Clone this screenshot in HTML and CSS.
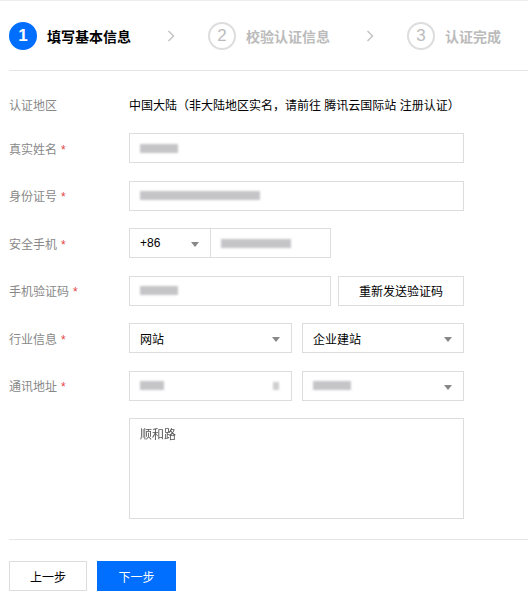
FILE: index.html
```html
<!DOCTYPE html>
<html lang="zh-CN">
<head>
<meta charset="utf-8">
<title>实名认证</title>
<link rel="stylesheet" href="styles.css">
</head>
<body>
<div class="page">
  <div class="steps">
    <div class="step active">
      <span class="step-num">1</span>
      <span class="step-text">填写基本信息</span>
    </div>
    <svg class="chevron" width="8" height="12" viewBox="0 0 8 12"><polyline points="1.5,1 6.5,6 1.5,11" fill="none" stroke="#c4c4c4" stroke-width="1.5"/></svg>
    <div class="step">
      <span class="step-num">2</span>
      <span class="step-text">校验认证信息</span>
    </div>
    <svg class="chevron" width="8" height="12" viewBox="0 0 8 12"><polyline points="1.5,1 6.5,6 1.5,11" fill="none" stroke="#c4c4c4" stroke-width="1.5"/></svg>
    <div class="step">
      <span class="step-num">3</span>
      <span class="step-text">认证完成</span>
    </div>
  </div>

  <div class="form">
    <div class="row row-first">
      <div class="label">认证地区</div>
      <div class="value">中国大陆（非大陆地区实名，请前往 腾讯云国际站 注册认证）</div>
    </div>
    <div class="row">
      <div class="label">真实姓名<span class="req">*</span></div>
      <div class="ctrl input full"><span class="blur w38"></span></div>
    </div>
    <div class="row">
      <div class="label">身份证号<span class="req">*</span></div>
      <div class="ctrl input full"><span class="blur w120"></span></div>
    </div>
    <div class="row">
      <div class="label">安全手机<span class="req">*</span></div>
      <div class="phone">
        <div class="ctrl select code"><span class="txt">+86</span><span class="arrow"></span></div>
        <div class="ctrl input tel"><span class="blur w70"></span></div>
      </div>
    </div>
    <div class="row">
      <div class="label">手机验证码<span class="req">*</span></div>
      <div class="sms">
        <div class="ctrl input smsin"><span class="blur w38"></span></div>
        <button class="ctrl btn-send" type="button">重新发送验证码</button>
      </div>
    </div>
    <div class="row">
      <div class="label">行业信息<span class="req">*</span></div>
      <div class="pair">
        <div class="ctrl select"><span class="txt">网站</span><span class="arrow"></span></div>
        <div class="ctrl select"><span class="txt">企业建站</span><span class="arrow"></span></div>
      </div>
    </div>
    <div class="row">
      <div class="label">通讯地址<span class="req">*</span></div>
      <div class="pair">
        <div class="ctrl select"><span class="blur w24"></span><span class="blur-dot"></span></div>
        <div class="ctrl select"><span class="blur w38"></span><span class="arrow"></span></div>
      </div>
    </div>
    <div class="row row-area">
      <div class="label"></div>
      <div class="ctrl textarea"><span class="area-text">顺和路</span></div>
    </div>
  </div>

  <div class="footer">
    <button class="btn btn-prev" type="button">上一步</button>
    <button class="btn btn-next" type="button">下一步</button>
  </div>
</div>
</body>
</html>
```

FILE: styles.css
```css
* { box-sizing: border-box; }
html, body { margin: 0; padding: 0; background: #fff; }
body {
  font-family: "Liberation Sans", "Noto Sans CJK SC", sans-serif;
  font-size: 12px;
  color: #000;
}
.page {
  border-top: 1px solid #eeeeee;
  padding-left: 9px;
}
.steps {
  height: 70px;
  display: flex;
  align-items: center;
  border-bottom: 1px solid #e5e5e5;
}
.step {
  display: flex;
  align-items: center;
  gap: 10px;
}
.step-num {
  width: 28px;
  height: 28px;
  border-radius: 50%;
  border: 2px solid #dddddd;
  color: #bbbbbb;
  display: flex;
  align-items: center;
  justify-content: center;
  font-size: 17px;
  font-family: "Liberation Sans", sans-serif;
}
.step.active .step-num {
  background: #006eff;
  border-color: #006eff;
  color: #fff;
  font-weight: bold;
}
.step-text {
  font-size: 14px;
  font-weight: bold;
  color: #bbbbbb;
}
.step.active .step-text { color: #000; }
.chevron {
  margin: 0 33px 0 36px;
}
.form {
  padding: 18px 0 20px;
  border-bottom: 1px solid #e5e5e5;
}
.row {
  display: flex;
  align-items: center;
  margin-top: 17.5px;
}
.row-first { margin-top: 0; height: 30px; }
.row-first + .row { margin-top: 14px; }
.row-area { align-items: flex-start; }
.label {
  width: 120px;
  flex: none;
  color: #888888;
}
.req {
  color: #e54545;
  margin-left: 4px;
}
.value { color: #000; }
.ctrl {
  height: 30px;
  border: 1px solid #dddddd;
  background: #fff;
  display: flex;
  align-items: center;
  padding: 0 10px;
  position: relative;
}
.full { width: 335px; }
.phone { display: flex; }
.code { width: 82px; }
.tel { width: 120px; border-left: none; }
.sms { display: flex; gap: 7px; }
.smsin { width: 202px; }
.btn-send {
  width: 126px;
  justify-content: center;
  font-family: inherit;
  font-size: 12px;
  color: #000;
  cursor: pointer;
}
.pair { display: grid; grid-template-columns: 163px 162px; gap: 10px; }
.select .txt { flex: 1; }
.arrow {
  position: absolute;
  right: 11px;
  top: 13px;
  width: 0;
  height: 0;
  border-left: 4px solid transparent;
  border-right: 4px solid transparent;
  border-top: 5px solid #888888;
}
.blur {
  display: inline-block;
  height: 9px;
  background: #c5c5c8;
  filter: blur(1.2px);
}
.w24 { width: 24px; }
.w38 { width: 38px; }
.w70 { width: 70px; }
.w120 { width: 120px; }
.blur-dot {
  position: absolute;
  right: 12px;
  top: 10px;
  width: 6px;
  height: 8px;
  background: #cfcfcf;
  filter: blur(1px);
}
.textarea {
  width: 335px;
  height: 101px;
  align-items: flex-start;
  padding-top: 6px;
}
.area-text {
  color: #555;
  filter: blur(0.7px);
}
.footer {
  padding-top: 21px;
  display: flex;
  gap: 10px;
}
.btn {
  height: 30px;
  font-family: inherit;
  font-size: 12px;
  cursor: pointer;
  border: 1px solid #dddddd;
  background: #fff;
  color: #000;
}
.btn-prev { width: 78px; }
.btn-next {
  width: 79px;
  background: #006eff;
  border-color: #006eff;
  color: #fff;
}
```
